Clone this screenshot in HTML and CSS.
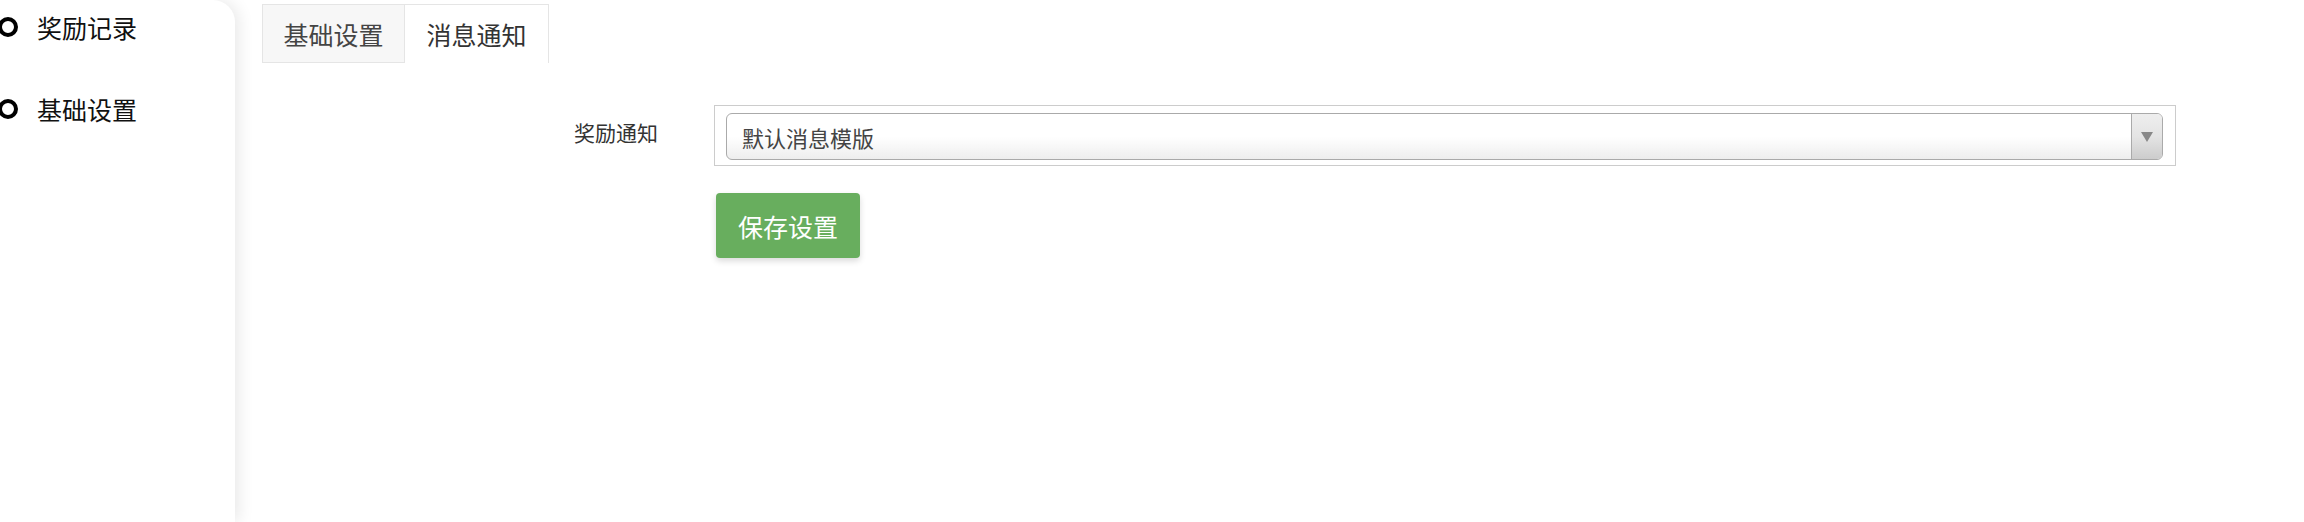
FILE: index.html
```html
<!DOCTYPE html>
<html lang="zh-CN">
<head>
<meta charset="utf-8">
<title>消息通知</title>
<link rel="stylesheet" href="styles.css">
</head>
<body>
<div class="page">
  <aside class="sidebar">
    <ul class="menu">
      <li class="menu-item"><span class="dot"></span><span class="menu-text">奖励记录</span></li>
      <li class="menu-item"><span class="dot"></span><span class="menu-text">基础设置</span></li>
    </ul>
  </aside>
  <main class="main">
    <div class="tabs">
      <div class="tab">基础设置</div>
      <div class="tab tab-active">消息通知</div>
    </div>
    <form class="form">
      <div class="form-row">
        <label class="form-label">奖励通知</label>
        <div class="select-wrap">
          <div class="select">
            <span class="select-value">默认消息模版</span>
            <span class="select-arrow"><span class="tri"></span></span>
          </div>
        </div>
      </div>
      <div class="form-actions">
        <button type="button" class="btn-save">保存设置</button>
      </div>
    </form>
  </main>
</div>
</body>
</html>
```

FILE: styles.css
```css
* { box-sizing: border-box; }
html, body {
  margin: 0;
  padding: 0;
  background: #fff;
  font-family: "Noto Sans CJK SC", "Noto Sans", sans-serif;
}
.page {
  display: flex;
  width: 2304px;
  height: 522px;
  overflow: hidden;
}
.sidebar {
  width: 235px;
  flex: 0 0 235px;
  height: 522px;
  background: #fff;
  border-top-right-radius: 22px;
  box-shadow: 4px 0 16px rgba(0, 0, 0, 0.09);
  position: relative;
  z-index: 1;
  overflow: hidden;
}
.menu {
  list-style: none;
  margin: 0;
  padding: 0;
}
.menu-item {
  display: flex;
  align-items: center;
  height: 54px;
  margin-bottom: 28px;
}
.dot {
  width: 20px;
  height: 20px;
  border: 4px solid #000;
  border-radius: 50%;
  flex: 0 0 20px;
  margin-left: -2px;
}
.menu-text {
  margin-left: 19px;
  font-size: 25px;
  color: #111;
}
.main {
  flex: 1;
  padding: 4px 0 0 27px;
}
.tabs {
  display: flex;
  height: 59px;
}
.tab {
  display: flex;
  align-items: center;
  justify-content: center;
  padding: 0 20px;
  width: 142px;
  font-size: 25px;
  color: #444;
  background: #f7f7f7;
  border: 1px solid #e5e5e5;
  border-right: none;
}
.tab-active {
  width: 145px;
  background: #fff;
  color: #333;
  border-right: 1px solid #e5e5e5;
  border-bottom: none;
}
.form {
  margin-top: 42px;
}
.form-row {
  display: grid;
  grid-template-columns: 396px 1462px;
  column-gap: 56px;
  align-items: center;
}
.form-label {
  text-align: right;
  font-size: 21px;
  color: #333;
  margin-top: -7px;
}
.select-wrap {
  height: 61px;
  border: 1px solid #ccc;
  padding: 7px 12px 5px 11px;
}
.select {
  display: flex;
  height: 47px;
  border: 1px solid #aaa;
  border-radius: 6px;
  background: linear-gradient(to bottom, #fff 0%, #fff 50%, #eee 100%);
  overflow: hidden;
}
.select-value {
  flex: 1;
  display: flex;
  align-items: center;
  padding-left: 15px;
  font-size: 22px;
  color: #444;
}
.select-arrow {
  width: 31px;
  display: flex;
  align-items: center;
  justify-content: center;
  border-left: 1px solid #aaa;
  background: linear-gradient(to bottom, #eee 0%, #e4e4e4 50%, #ccc 100%);
}
.tri {
  width: 0;
  height: 0;
  border-left: 6px solid transparent;
  border-right: 6px solid transparent;
  border-top: 10px solid #888;
}
.form-actions {
  margin-top: 27px;
  padding-left: 454px;
}
.btn-save {
  width: 144px;
  height: 65px;
  border: none;
  border-radius: 4px;
  background: #68ae5e;
  color: #fff;
  font-family: "Noto Sans CJK SC", "Noto Sans", sans-serif;
  font-size: 25px;
  box-shadow: 0 3px 6px rgba(0, 0, 0, 0.15);
  padding: 0;
}
```
